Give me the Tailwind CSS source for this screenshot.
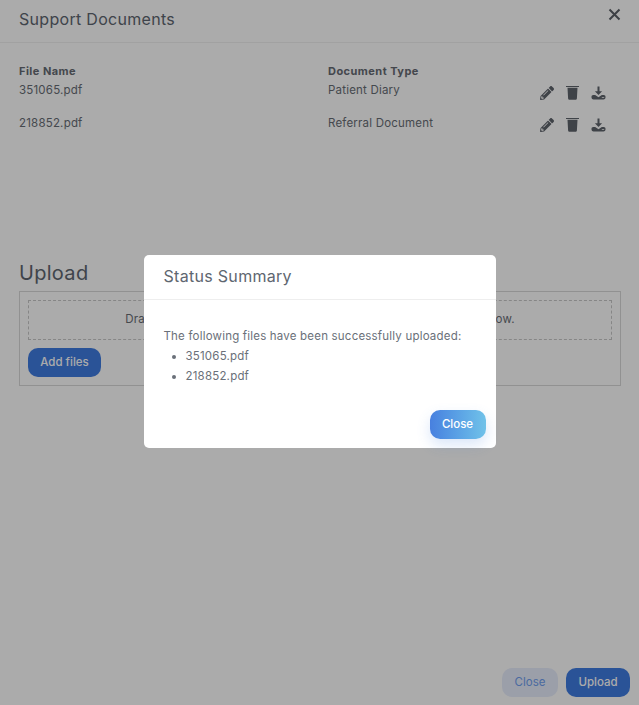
<!DOCTYPE html>
<html lang="en">
<head>
<meta charset="utf-8">
<title>Support Documents</title>
<script src="https://cdn.jsdelivr.net/npm/@tailwindcss/browser@4"></script>
</head>
<body class="bg-white font-['Inter','Noto_Sans',sans-serif] text-[#686d75]">
<div class="relative h-[705px] w-[639px] overflow-hidden">
  <div class="flex h-full flex-col">
    <header class="relative flex h-[43px] shrink-0 items-start border-b border-[#f0f0f0] px-[19px] pt-[7px]">
      <h1 class="text-[16px] leading-[24px] font-normal tracking-[0.3px] text-[#5e6670]">Support Documents</h1>
      <svg class="absolute top-[8px] left-[608px] h-[13px] w-[13px]" viewBox="0 0 13 13" fill="none" stroke="#5b6068" stroke-width="2"><path d="M1.5 1.5l10 10M11.5 1.5l-10 10"/></svg>
    </header>
    <section class="px-[19px] pt-[21px] text-[11.5px] tracking-[0.2px]">
      <div class="grid grid-cols-[309px_211px_auto]">
        <div class="h-[14px] text-[11px] leading-[14px] font-bold tracking-[0.46px] text-[#666b73]">File Name</div>
        <div class="h-[14px] text-[11px] leading-[14px] font-bold tracking-[0.46px] text-[#666b73]">Document Type</div>
        <div></div>
        <div class="h-[33px] pt-[5px] leading-[14px]">351065.pdf</div>
        <div class="h-[33px] pt-[5px] leading-[14px]">Patient Diary</div>
        <div class="flex h-[33px] items-start gap-[12px] pt-[8px]">
          <svg class="ml-[1px] h-[14px] w-[14px]" viewBox="0 0 512 512" fill="#5f646c"><path d="M497.9 142.1l-46.1 46.1c-4.7 4.7-12.3 4.7-17 0l-111-111c-4.7-4.7-4.7-12.3 0-17l46.1-46.1c18.7-18.7 49.1-18.7 67.9 0l60.1 60.1c18.8 18.7 18.8 49.1 0 67.9zM284.2 99.8L21.6 362.4.4 483.9c-2.9 16.4 11.4 30.6 27.8 27.8l121.5-21.3 262.6-262.6c4.7-4.7 4.7-12.3 0-17l-111-111c-4.8-4.7-12.4-4.7-17.1 0zM124.1 339.9c-5.5-5.5-5.5-14.3 0-19.8l154-154c5.5-5.5 14.3-5.5 19.8 0s5.5 14.3 0 19.8l-154 154c-5.5 5.5-14.3 5.5-19.8 0zM88 424h48v36.3l-64.5 11.3-31.1-31.1L51.7 376H88v48z"/></svg>
          <svg class="h-[14px] w-[13px]" viewBox="0 0 13 14" fill="#5f646c"><path d="M0 0h13v1H0zM1.5 1.800h10l-0.600 10.600c-0.100 0.900-0.700 1.400-1.400 1.400H3.500c-0.700 0-1.300-0.500-1.400-1.400z"/></svg>
          <svg class="h-[14px] w-[15px]" viewBox="0 0 15 14" fill="#5f646c"><path d="M6.500 0.500h2v4.700h2.600L7.500 9 3.900 5.200h2.600z"/><path fill-rule="evenodd" d="M0.500 10.800c0-1 .7-1.800 1.700-1.800h2l3.300 2.200L10.800 9h2c1 0 1.700.8 1.700 1.800v.7c0 1.200-1 2-2 2H2.500c-1 0-2-.8-2-2zM10.800 11.300v.8h2.400v-.8z"/></svg>
        </div>
        <div class="h-[33px] pt-[5px] leading-[14px]">218852.pdf</div>
        <div class="h-[33px] pt-[5px] leading-[14px]">Referral Document</div>
        <div class="flex h-[33px] items-start gap-[12px] pt-[7px]">
          <svg class="ml-[1px] h-[14px] w-[14px]" viewBox="0 0 512 512" fill="#5f646c"><path d="M497.9 142.1l-46.1 46.1c-4.7 4.7-12.3 4.7-17 0l-111-111c-4.7-4.7-4.7-12.3 0-17l46.1-46.1c18.7-18.7 49.1-18.7 67.9 0l60.1 60.1c18.8 18.7 18.8 49.1 0 67.9zM284.2 99.8L21.6 362.4.4 483.9c-2.9 16.4 11.4 30.6 27.8 27.8l121.5-21.3 262.6-262.6c4.7-4.7 4.7-12.3 0-17l-111-111c-4.8-4.7-12.4-4.7-17.1 0zM124.1 339.9c-5.5-5.5-5.5-14.3 0-19.8l154-154c5.5-5.5 14.3-5.5 19.8 0s5.5 14.3 0 19.8l-154 154c-5.5 5.5-14.3 5.5-19.8 0zM88 424h48v36.3l-64.5 11.3-31.1-31.1L51.7 376H88v48z"/></svg>
          <svg class="h-[14px] w-[13px]" viewBox="0 0 13 14" fill="#5f646c"><path d="M0 0h13v1H0zM1.5 1.800h10l-0.600 10.600c-0.100 0.900-0.700 1.400-1.400 1.400H3.500c-0.700 0-1.300-0.500-1.400-1.400z"/></svg>
          <svg class="h-[14px] w-[15px]" viewBox="0 0 15 14" fill="#5f646c"><path d="M6.500 0.500h2v4.700h2.600L7.500 9 3.900 5.200h2.600z"/><path fill-rule="evenodd" d="M0.500 10.800c0-1 .7-1.800 1.700-1.800h2l3.300 2.200L10.800 9h2c1 0 1.700.8 1.700 1.800v.7c0 1.200-1 2-2 2H2.500c-1 0-2-.8-2-2zM10.800 11.300v.8h2.400v-.8z"/></svg>
        </div>
      </div>
    </section>
    <section class="px-[19px] pt-[116px]">
      <h2 class="text-[20px] leading-[26px] font-normal tracking-[0.3px] text-[#5e6670]">Upload</h2>
      <div class="mt-[5px] h-[95px] w-[602px] border border-[#d8d8d8] p-[8px]">
        <div class="flex h-[40px] items-center justify-center border border-dashed border-[#c8c8c8] text-[11.5px] tracking-[0.24px]">Drag and drop your files here, or choose them with the button below.</div>
        <button class="mt-[8px] h-[29px] w-[73px] rounded-[10px] bg-[#3f7ce2] text-[11.5px] font-medium text-white">Add files</button>
      </div>
    </section>
    <footer class="mt-auto flex justify-end gap-[8px] pr-[9px] pb-[8px]">
      <button class="h-[29px] w-[56px] rounded-[10px] bg-[#e8eefc] text-[11.5px] font-normal text-[#6f9ff0]">Close</button>
      <button class="h-[29px] w-[64px] rounded-[10px] bg-[#3f7ce2] text-[11.5px] font-medium text-white">Upload</button>
    </footer>
  </div>
  <div class="absolute inset-0 flex justify-center bg-black/33 pt-[255px]">
    <div class="h-[193px] w-[352px] rounded-[5px] bg-white text-[#6a7079]">
      <div class="flex h-[45px] items-center border-b border-[#eeeeee] px-[20px] pb-[2px] text-[16px] font-normal tracking-[0.3px] text-[#5e6670]">Status Summary</div>
      <div class="px-[20px] pt-[29px] text-[11.5px] leading-[14px] tracking-[0.2px]">
        <p>The following files have been successfully uploaded:</p>
        <ul class="mt-[6px] list-disc pl-[22px]">
          <li class="h-[20px] leading-[14px]">351065.pdf</li>
          <li class="h-[20px] leading-[14px]">218852.pdf</li>
        </ul>
      </div>
      <div class="mt-[21px] flex justify-end pr-[10px]">
        <button class="h-[29px] w-[56px] rounded-[10px] bg-linear-to-r from-[#4880df] to-[#70c2e9] text-[11.5px] font-medium text-white shadow-[0_6px_14px_rgba(72,128,223,0.2)]">Close</button>
      </div>
    </div>
  </div>
</div>
</body>
</html>
